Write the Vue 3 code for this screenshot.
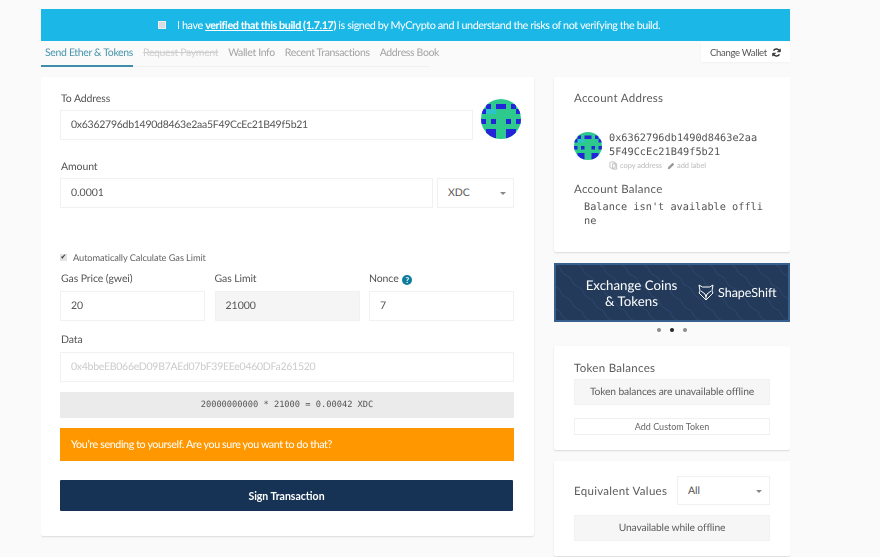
<script setup>
const cells = [
  [1,1,1,1],[3,1,2,1],[6,1,1,1],
  [0,2,1,1],[7,2,1,1],
  [0,4,1,1],[2,4,1,1],[5,4,1,1],[7,4,1,1],
  [1,6,2,2],[5,6,2,2]
]
const tabs = ['Wallet Info', 'Recent Transactions', 'Address Book']
</script>

<template>
  <div class="page">
    <div class="banner">
      <span class="box"></span>
      <span>I have <u>verified that this build (1.7.17)</u> is signed by MyCrypto and I understand the risks of not verifying the build.</span>
    </div>

    <div class="nav">
      <div class="tabs">
        <span class="tab active">Send Ether &amp; Tokens</span>
        <span class="tab struck">Request Payment</span>
        <span v-for="t in tabs" :key="t" class="tab">{{ t }}</span>
      </div>
      <button class="change">
        Change Wallet
        <svg width="9" height="9" viewBox="0 0 12 12" fill="none" stroke="#333" stroke-width="2">
          <path d="M10.5 4.5A4.8 4.8 0 0 0 2 3.4" />
          <path d="M1.5 7.5A4.8 4.8 0 0 0 10 8.6" />
          <path d="M11 1v4H7" stroke-width="1.2" fill="#333" />
          <path d="M1 11V7h4" stroke-width="1.2" fill="#333" />
        </svg>
      </button>
    </div>

    <div class="columns">
      <main class="card form">
        <label class="lab first">To Address</label>
        <div class="addr-row">
          <div class="input grow tight">0x6362796db1490d8463e2aa5F49CcEc21B49f5b21</div>
          <svg class="ident big" viewBox="0 0 8 8">
            <rect width="8" height="8" fill="#2ec98c" />
            <rect x="1" y="2" width="2" height="1" fill="#2bc4c8" />
            <rect v-for="(c, i) in cells" :key="i" :x="c[0]" :y="c[1]" :width="c[2]" :height="c[3]" fill="#2424d8" />
          </svg>
        </div>

        <label class="lab amount">Amount</label>
        <div class="amount-row">
          <div class="input grow">0.0001</div>
          <div class="input select unit">XDC<i class="caret"></i></div>
        </div>

        <div class="auto">
          <span class="check">✔</span>
          <span>Automatically Calculate Gas Limit</span>
        </div>

        <div class="gas">
          <div>
            <label class="lab">Gas Price (gwei)</label>
            <div class="input">20</div>
          </div>
          <div>
            <label class="lab limit">Gas Limit</label>
            <div class="input off">21000</div>
          </div>
          <div>
            <label class="lab nonce">Nonce <b class="help">?</b></label>
            <div class="input">7</div>
          </div>
        </div>

        <label class="lab data">Data</label>
        <div class="input ghost tight">0x4bbeEB066eD09B7AEd07bF39EEe0460DFa261520</div>

        <div class="calc">20000000000 * 21000 = 0.00042 XDC</div>
        <div class="warn">You’re sending to yourself. Are you sure you want to do that?</div>
        <button class="sign">Sign Transaction</button>
      </main>

      <aside class="side">
        <section class="card account">
          <h3>Account Address</h3>
          <div class="who">
            <svg class="ident small" viewBox="0 0 8 8">
              <rect width="8" height="8" fill="#2ec98c" />
              <rect x="1" y="2" width="2" height="1" fill="#2bc4c8" />
              <rect v-for="(c, i) in cells" :key="i" :x="c[0]" :y="c[1]" :width="c[2]" :height="c[3]" fill="#2424d8" />
            </svg>
            <div>
              <div class="mono">0x6362796db1490d8463e2aa<br />5F49CcEc21B49f5b21</div>
              <div class="tools">
                <svg width="9" height="9" viewBox="0 0 10 10" fill="none" stroke="#bbb"><rect x="1" y="1" width="6" height="7" rx="1.5" /><path d="M4 3h4.5v6H4z" /></svg>
                <span>copy address</span>
                <svg width="8" height="8" viewBox="0 0 10 10" fill="#999"><path d="M1 9l.6-2.6L7 1l2 2-5.400 5.400z" /></svg>
                <span>add label</span>
              </div>
            </div>
          </div>
          <h3 class="bal">Account Balance</h3>
          <div class="mono offline">Balance isn't available offli<br />ne</div>
        </section>

        <div class="promo">
          <svg class="waves" width="100%" height="100%">
            <defs>
              <pattern id="wave" width="22" height="22" patternUnits="userSpaceOnUse">
                <path d="M0 0q4 1 5 5t6 6q4 1 5 5t6 6" fill="none" stroke="#31496d" stroke-width=".8" />
              </pattern>
            </defs>
            <rect width="100%" height="100%" fill="url(#wave)" />
          </svg>
          <div class="promo-text">Exchange Coins<br />&amp; Tokens</div>
          <div class="brand">
            <svg width="16" height="17" viewBox="0 0 16 17" fill="none" stroke="#fff" stroke-width="1">
              <path d="M1 1l3.500 2h7L15 1l-1 6 1 2-7 7-7-7 1-2z" />
              <path d="M3 7l4 3 1 3 1-3 4-3M8 13v3" />
            </svg>
            <span>ShapeShift</span>
          </div>
        </div>
        <div class="dots"><i></i><i class="on"></i><i></i></div>

        <section class="card tokens">
          <h3>Token Balances</h3>
          <div class="note">Token balances are unavailable offline</div>
          <button class="custom">Add Custom Token</button>
        </section>

        <section class="card equiv">
          <div class="equiv-head">
            <h3>Equivalent Values</h3>
            <div class="input select all">All<i class="caret"></i></div>
          </div>
          <div class="note">Unavailable while offline</div>
        </section>
      </aside>
    </div>
  </div>
</template>

<style>
body { margin: 0; background: #fafafa; }
</style>

<style scoped>
.page {
  width: 749px;
  height: 557px;
  margin-left: 41px;
  padding-top: 9px;
  box-sizing: border-box;
  overflow: hidden;
  font-family: Lato, sans-serif;
  color: #555;
  font-size: 10.500px;
  filter: blur(.4px);
  text-rendering: geometricPrecision;
}
.banner {
  height: 32px;
  background: #1bb7e6;
  color: #fff;
  font-size: 10.800px;
  letter-spacing: -.4px;
  display: flex;
  align-items: center;
  justify-content: center;
  gap: 11px;
  padding-right: 13px;
  box-sizing: border-box;
}
.banner u { font-weight: 700; }
.box { width: 6px; height: 6px; background: #d5dde2; border: 1px solid #eee; }
.nav { display: flex; justify-content: space-between; height: 26px; }
.tabs { display: flex; width: 389px; height: 26px; border-bottom: 1px solid #f0f0f0; box-sizing: border-box; letter-spacing: -.35px; }
.tab { padding: 0 5px; line-height: 25px; color: #a4a4a4; white-space: nowrap; }
.active { color: #4a96ad; border-bottom: 2px solid #3d8ea6; height: 26px; padding: 0 0 0 4px; width: 92px; box-sizing: border-box; margin-right: 5px; flex: none; }
.struck { color: #cfcfcf; text-decoration: line-through; }
.change {
  width: 89px; height: 20px; margin-top: 1px;
  border: 0; background: #fff;
  font: 9.500px Lato, sans-serif; color: #555; letter-spacing: -.3px;
  box-shadow: 0 1px 2px rgba(0,0,0,.04);
  display: flex; align-items: center; justify-content: center; gap: 5px;
}
.columns { display: flex; justify-content: space-between; margin-top: 10px; align-items: flex-start; }
.card { background: #fff; border-radius: 2px; box-shadow: 0 1px 2px rgba(0,0,0,.13); box-sizing: border-box; }
.form { width: 493px; height: 459px; padding: 15px 20px 0 19px; }
.lab { display: block; color: #555; font-size: 10.500px; line-height: 15px; padding-left: 1px; letter-spacing: -.1px; }
.first { margin-bottom: 3px; }
.addr-row { display: flex; gap: 8px; align-items: flex-start; height: 30px; margin-right: -7px; }
.input {
  height: 30px; box-sizing: border-box;
  border: 1px solid #eff1f3; background: #fff;
  padding-left: 10px; line-height: 29px;
  color: #555; font-size: 10.500px;
}
.tight { letter-spacing: -.27px; }
.grow { flex: 1; }
.ident { border-radius: 50%; flex: none; display: block; }
.big { width: 40px; height: 40px; margin-top: -11px; }
.small { width: 28px; height: 28px; }
.amount { margin-top: 20px; margin-bottom: 3px; }
.amount-row { display: flex; gap: 4px; }
.select { position: relative; }
.unit { width: 77px; }
.caret {
  position: absolute; right: 7px; top: 13px;
  border: 3px solid transparent; border-top-color: #888; border-bottom: 0;
}
.auto { display: flex; align-items: center; gap: 6px; margin-top: 43px; height: 12px; font-size: 9.300px; color: #666; letter-spacing: -.1px; }
.check { width: 7px; height: 7px; background: #e3e3e3; font-size: 7px; line-height: 7px; color: #333; text-align: center; }
.gas { display: grid; grid-template-columns: 145px 145px 145px; column-gap: 9.500px; margin-top: 9px; }
.gas .lab { margin-bottom: 4px; }
.gas .limit { padding-left: 0; }
.gas .nonce { padding-left: 0; }
.off { background: #f5f5f5; }
.help {
  display: inline-block; width: 10px; height: 10px; border-radius: 50%;
  background: #0e7c9e; color: #fff; font-size: 8px; line-height: 10px; text-align: center;
  margin-left: 1px; vertical-align: -1px;
}
.data { margin-top: 12px; margin-bottom: 4px; }
.ghost { color: #ccc; }
.calc {
  height: 26px; margin-top: 10px; background: #ebebeb; color: #555;
  font: 8.700px/26px "DejaVu Sans Mono", monospace; text-align: center;
}
.warn {
  height: 33px; margin-top: 10px; background: #ff9800; color: #fff;
  padding-left: 11px; line-height: 33px; font-size: 10.700px; letter-spacing: -.38px;
}
.sign {
  display: block; width: 453px; height: 31px; margin-top: 19px; border: 0;
  background: #163254; color: #fff; border-radius: 1px;
  font: 700 10.500px Lato, sans-serif;
}
.side { width: 236px; }
h3 { margin: 0; font-weight: 400; font-size: 11.500px; color: #5c5c5c; letter-spacing: .3px; line-height: 14px; }
.account { height: 175px; padding: 15px 20px 0; }
.who { display: flex; gap: 7px; margin-top: 26px; align-items: flex-start; }
.mono { font: 10.250px/14px "DejaVu Sans Mono", monospace; color: #555; }
.tools { display: flex; align-items: center; gap: 2px; color: #bbb; font-size: 7.500px; line-height: 11px; margin-top: 1px; }
.tools span { margin-right: 3px; letter-spacing: -.05px; }
.who > div { margin-top: -1px; }
.bal { margin-top: 12px; }
.offline { margin: 4px 0 0 10px; line-height: 13.500px; }
.promo {
  position: relative; height: 59px; margin-top: 11px; box-sizing: border-box;
  background: #233a5b; border: 2px solid #38608f;
  display: flex; align-items: center; color: #fff;
}
.waves { position: absolute; inset: 0; }
.promo-text { position: relative; width: 151px; text-align: center; font-size: 13.300px; line-height: 16px; }
.brand { position: relative; display: flex; align-items: center; gap: 4px; font-size: 12.500px; margin-left: -9px; white-space: nowrap; }
.dots { display: flex; justify-content: center; gap: 9px; height: 24px; padding-top: 6px; box-sizing: border-box; }
.dots i { width: 4px; height: 4px; border-radius: 50%; background: #8a8a8a; }
.dots .on { background: #222; }
.tokens { height: 104px; padding: 16px 20px 0; }
.note {
  height: 26px; background: #f6f6f6; border: 1px solid #f2f2f2; box-sizing: border-box;
  color: #5f5f5f; font-size: 10.300px; line-height: 24px; text-align: center; letter-spacing: -.15px;
}
.tokens .note { margin-top: 3px; }
.custom {
  display: block; width: 100%; height: 17px; margin-top: 13px;
  border: 1px solid #f0f0f0; background: #fff; color: #666;
  font: 9px Lato, sans-serif; padding: 0;
}
.equiv { height: 95px; margin-top: 11px; padding: 15px 20px 0; }
.equiv-head { display: flex; justify-content: space-between; align-items: center; }
.equiv-head h3 { padding-top: 2px; }
.all { width: 93px; height: 29px; line-height: 28px; }
.equiv .note { margin-top: 10px; }
</style>
